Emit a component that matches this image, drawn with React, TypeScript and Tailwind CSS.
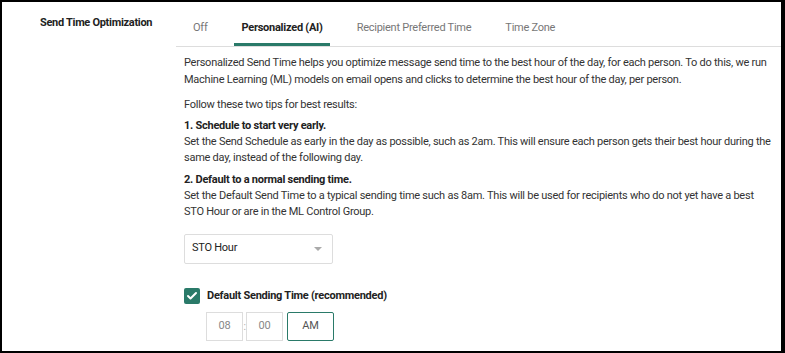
import { Check } from "lucide-react"

const tabs = ["Off", "Personalized (AI)", "Recipient Preferred Time", "Time Zone"]

export default function App() {
  return (
    <div
      className="h-[353px] w-[785px] overflow-hidden border-t-2 border-r-4 border-b-2 border-l-2 border-black bg-white text-[11px] tracking-[-0.25px] text-[#333]"
      style={{ fontFamily: "Roboto, 'Liberation Sans', sans-serif" }}
    >
      <div className="flex">
        <div className="w-[174px] shrink-0 pt-[13px] pl-[38px] font-bold tracking-[-0.3px] text-[#222]">
          Send Time Optimization
        </div>
        <div className="flex-1">
          <div className="flex border-b border-[#dddddd] pt-[18px]">
            {tabs.map((t, i) =>
              i === 1 ? (
                <div key={t} className="px-[10px]">
                  <div className="border-b-[3px] border-[#2a7a69] px-[7px] pb-[6px] font-bold text-[#222]">{t}</div>
                </div>
              ) : (
                <div key={t} className="px-[17px] pb-[9px] text-[#777]">
                  {t}
                </div>
              )
            )}
          </div>
          <div className="pt-[7px] pr-[6px] pl-[8px]">
            <p className="leading-[17px]">
              Personalized Send Time helps you optimize message send time to the best hour of the day, for each
              person. To do this, we run Machine Learning (ML) models on email opens and clicks to determine the best
              hour of the day, per person.
            </p>
            <p className="mt-[8px] leading-[17px]">Follow these two tips for best results:</p>
            <div className="mt-[5px] leading-[16px]">
              <div className="font-bold text-[#222]">1. Schedule to start very early.</div>
              <div>
                Set the Send Schedule as early in the day as possible, such as 2am. This will ensure each person gets
                their best hour during the same day, instead of the following day.
              </div>
            </div>
            <div className="mt-[6px] leading-[16px]">
              <div className="font-bold text-[#222]">2. Default to a normal sending time.</div>
              <div>
                Set the Default Send Time to a typical sending time such as 8am. This will be used for recipients who
                do not yet have a best STO Hour or are in the ML Control Group.
              </div>
            </div>
            <div className="mt-[14px] flex h-[30px] w-[149px] items-center justify-between rounded-[2px] border border-[#dddddd] pr-[10px] pl-[7px]">
              <span className="text-[#222]">STO Hour</span>
              <span className="h-0 w-0 border-x-[4px] border-t-[4px] border-x-transparent border-t-[#aaa]" />
            </div>
            <div className="mt-[24px] flex items-center gap-[7px]">
              <span className="flex h-[16px] w-[16px] items-center justify-center rounded-[2px] bg-[#2a7a69]">
                <Check size={12} strokeWidth={4} color="white" />
              </span>
              <span className="font-bold text-[#222]">Default Sending Time (recommended)</span>
            </div>
            <div className="mt-[8px] ml-[22px] flex items-center">
              <div className="flex h-[29px] w-[37px] items-center justify-center border border-[#dddddd] text-[#888]">
                08
              </div>
              <span className="w-[3px] text-center text-[10px] text-[#aaa]">:</span>
              <div className="flex h-[29px] w-[37px] items-center justify-center border border-[#dddddd] text-[#888]">
                00
              </div>
              <div className="ml-[4px] flex h-[29px] w-[47px] items-center justify-center rounded-[2px] border border-[#2a7a69] text-[#555]">
                AM
              </div>
            </div>
          </div>
        </div>
      </div>
    </div>
  )
}
